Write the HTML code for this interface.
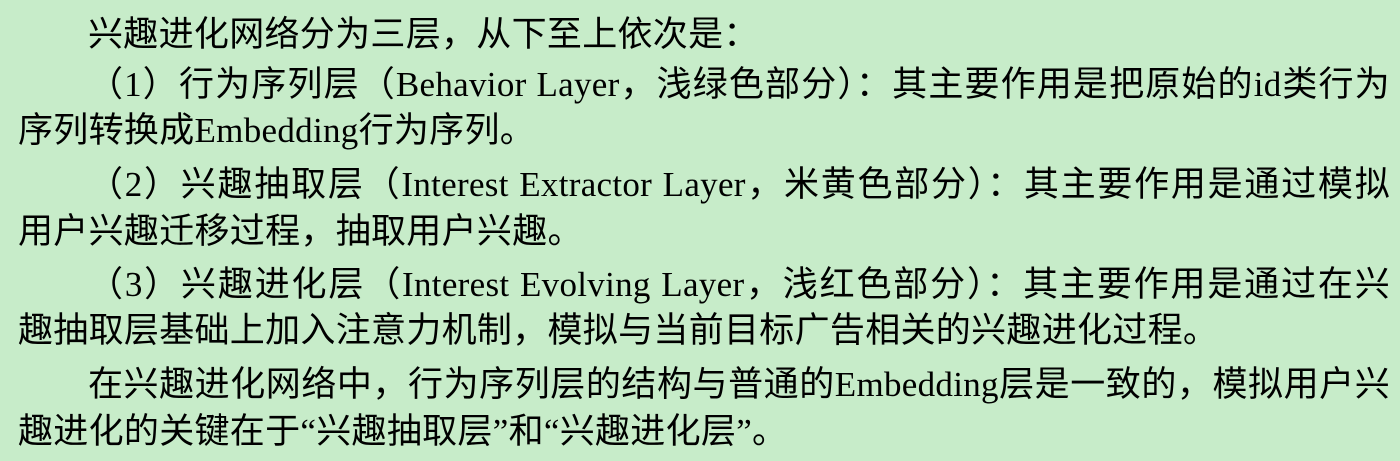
<!DOCTYPE html>
<html><head><meta charset="utf-8"><style>
html,body{margin:0;padding:0;}
body{width:1400px;height:461px;background:#c7ecc9;position:relative;overflow:hidden;
font-family:"Liberation Serif","WenQuanYi Zen Hei","Noto Sans CJK SC",serif;font-size:35px;color:#000;}
.l{position:absolute;left:18px;width:1372px;height:46px;line-height:46px;white-space:nowrap;letter-spacing:0.3px;}
.i{left:88px;width:1302px;}
.j{text-align:justify;text-align-last:justify;}
</style></head><body>
<div class="l i" style="top:12px">兴趣进化网络分为三层，从下至上依次是：</div>
<div class="l i j" style="top:62px">（1）行为序列层（Behavior Layer，浅绿色部分）：其主要作用是把原始的id类行为</div>
<div class="l" style="top:108px">序列转换成Embedding行为序列。</div>
<div class="l i j" style="top:162px">（2）兴趣抽取层（Interest Extractor Layer，米黄色部分）：其主要作用是通过模拟</div>
<div class="l" style="top:209px">用户兴趣迁移过程，抽取用户兴趣。</div>
<div class="l i j" style="top:262px">（3）兴趣进化层（Interest Evolving Layer，浅红色部分）：其主要作用是通过在兴</div>
<div class="l" style="top:308px">趣抽取层基础上加入注意力机制，模拟与当前目标广告相关的兴趣进化过程。</div>
<div class="l i j" style="top:362px">在兴趣进化网络中，行为序列层的结构与普通的Embedding层是一致的，模拟用户兴</div>
<div class="l" style="top:409px">趣进化的关键在于“兴趣抽取层”和“兴趣进化层”。</div>
</body></html>
